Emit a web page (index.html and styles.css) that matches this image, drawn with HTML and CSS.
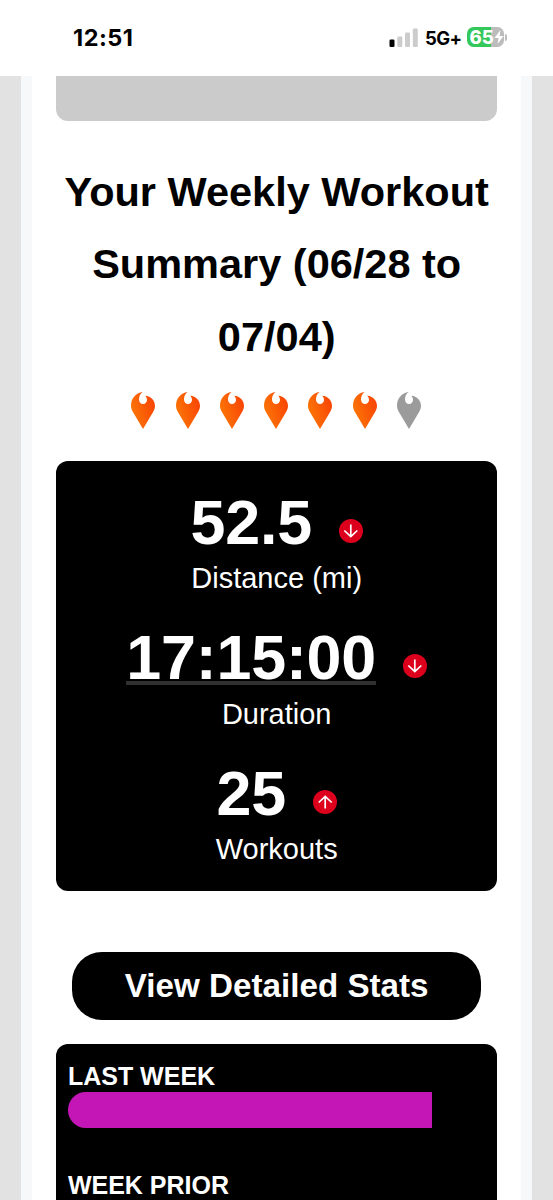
FILE: index.html
```
<!DOCTYPE html>
<html lang="en">
<head>
<meta charset="utf-8">
<title>Weekly Workout Summary</title>
<link rel="stylesheet" href="styles.css">
</head>
<body>
<svg class="defs" width="0" height="0" aria-hidden="true">
  <defs>
    <linearGradient id="fire" x1="0" y1="0.7" x2="1" y2="0.25">
      <stop offset="0" stop-color="#fb7906"/>
      <stop offset="1" stop-color="#f94305"/>
    </linearGradient>
    <symbol id="flame" viewBox="0 0 24 37">
      <path d="M12 37L2.200 20.500C0.700 18 0 16 0 13.500C0 6.500 5 0.800 11.500 0C9.200 1.800 8 4.500 8 7.500C8 10.200 9.700 12 12 12C14.300 12 16 10.200 16 8C16 6.200 15.300 4.800 14.300 3.700C20 4.200 24 8.500 24 13.800C24 16 23.300 18 21.800 20.500Z"/>
    </symbol>
    <symbol id="arrow" viewBox="0 0 24 24">
      <circle cx="12" cy="12" r="12" fill="#dd001c"/>
      <path d="M11.800 5.500V17.500M5.300 11.500L11.800 17.700L18.300 11.500" fill="none" stroke="#fff" stroke-width="1.700"/>
    </symbol>
  </defs>
</svg>
<header class="status">
  <span class="time">12:51</span>
  <div class="indicators">
    <svg class="signal" width="29" height="19" viewBox="0 0 29 19">
      <rect x="0.500" y="11.500" width="5" height="7.500" rx="1.300" fill="#000"/>
      <rect x="8.300" y="8.500" width="5" height="10.500" rx="1.300" fill="#ccc"/>
      <rect x="16" y="4.500" width="5" height="14.500" rx="1.300" fill="#ccc"/>
      <rect x="23.800" y="0.500" width="5" height="18.500" rx="1.300" fill="#ccc"/>
    </svg>
    <span class="network">5G+</span>
    <span class="battery"><span class="level">65</span>
      <svg class="bolt" width="10" height="14" viewBox="0 0 10 14"><path d="M6.500 0L0.500 8H4.500L3.500 14L9.500 6H5.500Z" fill="#fff"/></svg>
    </span>
    <span class="cap"></span>
  </div>
</header>
<div class="page">
  <main class="content">
    <div class="banner"></div>
    <h1>Your Weekly Workout Summary (06/28 to 07/04)</h1>
    <div class="flames">
      <svg><use href="#flame"/></svg>
      <svg><use href="#flame"/></svg>
      <svg><use href="#flame"/></svg>
      <svg><use href="#flame"/></svg>
      <svg><use href="#flame"/></svg>
      <svg><use href="#flame"/></svg>
      <svg class="missed"><use href="#flame"/></svg>
    </div>
    <section class="stats">
      <div class="stat">
        <div class="figure"><span class="value">52.5</span><svg class="trend"><use href="#arrow"/></svg></div>
        <div class="label">Distance (mi)</div>
      </div>
      <div class="stat">
        <div class="figure"><span class="value linked">17:15:00</span><svg class="trend"><use href="#arrow"/></svg></div>
        <div class="label">Duration</div>
      </div>
      <div class="stat">
        <div class="figure"><span class="value">25</span><svg class="trend up"><use href="#arrow"/></svg></div>
        <div class="label">Workouts</div>
      </div>
    </section>
    <a class="button">View Detailed Stats</a>
    <section class="chart">
      <div class="row"><div class="period">LAST WEEK</div><div class="bar"></div></div>
      <div class="row"><div class="period">WEEK PRIOR</div></div>
    </section>
  </main>
</div>
</body>
</html>
```
FILE: styles.css
```
* { box-sizing: border-box; }
body {
  margin: 0;
  height: 1200px;
  overflow: hidden;
  display: flex;
  flex-direction: column;
  background: #fff;
  color: #000;
  font-family: "Liberation Sans", Arial, sans-serif;
}
.defs { position: absolute; }
.status {
  flex: none;
  height: 76px;
  padding: 0 46px 2px 73px;
  display: flex;
  align-items: center;
  justify-content: space-between;
  font-family: Inter, sans-serif;
}
.time { font-size: 23.500px; font-weight: 700; letter-spacing: 0.500px; }
.indicators { display: flex; align-items: center; }
.network {
  margin-left: 7px;
  width: 42px;
  padding-top: 2px;
  font-size: 18.500px;
  font-weight: 700;
  letter-spacing: -0.600px;
}
.battery {
  width: 37px;
  height: 20px;
  border-radius: 6.500px;
  background: linear-gradient(90deg, #34c759 24px, #bcbcbc 24px);
  display: flex;
  align-items: center;
  padding-left: 2.500px;
}
.level {
  color: #fff;
  font-size: 18.500px;
  font-weight: 800;
  line-height: 20px;
  width: 24px;
}
.cap {
  width: 2px;
  height: 7px;
  margin-left: 1px;
  border-radius: 0 2px 2px 0;
  background: #bcbcbc;
}
.page {
  flex: 1;
  min-height: 0;
  border: solid #e2e2e2;
  border-width: 0 21px;
  background: #f6f8f9;
  display: flex;
}
.content {
  width: 489px;
  margin-left: 11px;
  height: 1124px;
  overflow: hidden;
  background: #fff;
  padding: 0 24px 0 24.400px;
  display: flex;
  flex-direction: column;
}
.content > * { flex: none; }
.banner {
  height: 45px;
  border-radius: 0 0 12px 12px;
  background: #cbcbcb;
}
h1 {
  margin: 34.900px 0 0;
  font-size: 41.500px;
  line-height: 72.500px;
  text-align: center;
}
.flames {
  margin: 18.700px 1px 0 0;
  display: flex;
  justify-content: center;
  gap: 20.300px;
}
.flames svg { width: 24px; height: 37px; fill: url(#fire); }
.flames .missed { fill: #9b9b9b; }
.stats {
  margin-top: 32px;
  height: 430px;
  padding-top: 24px;
  border-radius: 12px;
  background: #000;
  color: #fff;
}
.stat { height: 135.400px; text-align: center; }
.figure {
  height: 71.400px;
  display: flex;
  justify-content: center;
  gap: 27px;
}
.value {
  font-size: 62.800px;
  line-height: 74px;
  font-weight: 700;
  letter-spacing: -0.200px;
}
.linked {
  height: 75px;
  background: linear-gradient(#303030, #303030) 0 61px / 100% 4px no-repeat;
}
.trend { width: 24px; height: 24px; margin-top: 34px; }
.up { transform: rotate(180deg); }
.label {
  font-size: 29px;
  line-height: 44px;
}
.button {
  margin: 61px 16px 0;
  height: 67.500px;
  border-radius: 30px;
  background: #000;
  color: #fff;
  font-size: 33.200px;
  font-weight: 700;
  line-height: 67.500px;
  text-align: center;
}
.chart {
  margin-top: 24px;
  height: 200px;
  padding: 16px 12px;
  border-radius: 12px 12px 0 0;
  background: #000;
  color: #fff;
}
.row { height: 109px; }
.period {
  margin-left: -0.500px;
  font-size: 25px;
  font-weight: 700;
  line-height: 32.500px;
}
.bar {
  width: 363.600px;
  height: 35.500px;
  border-radius: 17.700px 0 0 17.700px;
  background: #c415b6;
}
```
